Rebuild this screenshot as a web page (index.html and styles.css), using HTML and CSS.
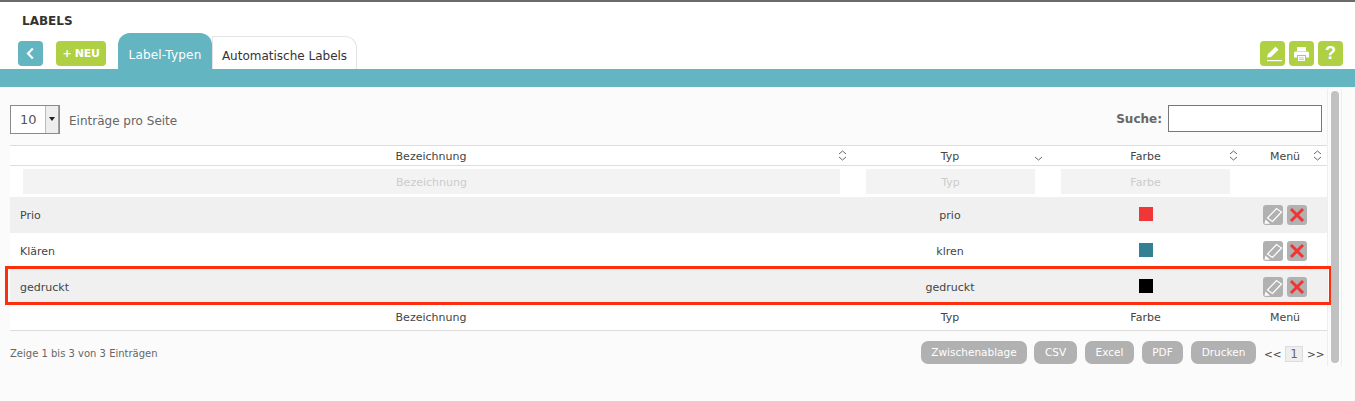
FILE: index.html
```html
<!DOCTYPE html>
<html lang="de">
<head>
    <meta charset="UTF-8">
    <meta name="viewport" content="width=device-width, initial-scale=1.0">
    <title>Labels</title>
    <link rel="stylesheet" href="styles.css">
</head>

<body>

    <header class="top">
        <h1 class="page-title">LABELS</h1>
        <div class="toolbar">
            <a class="btn btn-back" href="#">
                <svg width="25" height="25" viewBox="0 0 25 25"><path d="M14.8 7.5 L10 12.5 L14.8 17.5" fill="none" stroke="#fff" stroke-width="2.2"/></svg>
            </a>
            <a class="btn btn-new" href="#">+ NEU</a>
            <div class="tabs">
                <a class="tab tab-active" href="#">Label-Typen</a>
                <a class="tab" href="#">Automatische Labels</a>
            </div>
            <div class="tools">
                <a class="btn btn-tool" href="#">
                    <svg width="25" height="25" viewBox="0 0 25 25">
                        <path d="M7 16.5 L8 13 L15.5 5.8 L18.6 8.8 L11 16 Z" fill="#fff"/>
                        <rect x="7" y="19" width="15" height="1.2" fill="#fff"/>
                    </svg>
                </a>
                <a class="btn btn-tool" href="#">
                    <svg width="25" height="25" viewBox="0 0 25 25">
                        <rect x="8" y="6" width="9" height="4" fill="#fff"/>
                        <path d="M6.5 10.5 H18.5 Q20 10.5 20 12 V16.5 H17 V14 H8 V16.5 H5 V12 Q5 10.5 6.5 10.5 Z" fill="#fff"/>
                        <path d="M9 15 H16 V20 H9 Z M10 16.5 V17.2 H15 V16.5 Z M10 18.2 V18.9 H15 V18.2 Z" fill="#fff" fill-rule="evenodd"/>
                    </svg>
                </a>
                <a class="btn btn-tool btn-help" href="#">?</a>
            </div>
        </div>
    </header>

    <div class="teal-bar"></div>

    <main class="panel">
        <div class="content">
            <div class="controls">
                <div class="page-size">
                    <div class="select">
                        <span class="select-value">10</span>
                        <span class="select-arrow"></span>
                    </div>
                    <span class="page-size-label">Einträge pro Seite</span>
                </div>
                <label class="search">Suche: <input type="text"></label>
            </div>

            <div class="table-wrap">
                <table class="labels">
                    <colgroup>
                        <col class="col-name">
                        <col class="col-type">
                        <col class="col-color">
                        <col class="col-menu">
                    </colgroup>
                    <thead>
                        <tr class="head-row">
                            <th class="sort">Bezeichnung
                                <svg class="sort-icon" width="9" height="11" viewBox="0 0 9 11"><path d="M1 4 L4.5 1 L8 4 M1 7 L4.5 10 L8 7" fill="none" stroke="#666" stroke-width="1"/></svg>
                            </th>
                            <th class="sort">Typ
                                <svg class="sort-icon sort-down" width="9" height="11" viewBox="0 0 9 11"><path d="M1 7 L4.5 10 L8 7" fill="none" stroke="#666" stroke-width="1"/></svg>
                            </th>
                            <th class="sort">Farbe
                                <svg class="sort-icon" width="9" height="11" viewBox="0 0 9 11"><path d="M1 4 L4.5 1 L8 4 M1 7 L4.5 10 L8 7" fill="none" stroke="#666" stroke-width="1"/></svg>
                            </th>
                            <th class="sort">Menü
                                <svg class="sort-icon" width="9" height="11" viewBox="0 0 9 11"><path d="M1 4 L4.5 1 L8 4 M1 7 L4.5 10 L8 7" fill="none" stroke="#666" stroke-width="1"/></svg>
                            </th>
                        </tr>
                        <tr class="filter-row">
                            <td><input class="filter filter-name" type="text" placeholder="Bezeichnung"></td>
                            <td><input class="filter" type="text" placeholder="Typ"></td>
                            <td><input class="filter filter-color" type="text" placeholder="Farbe"></td>
                            <td></td>
                        </tr>
                    </thead>
                    <tbody>
                        <tr class="odd">
                            <td class="name">Prio</td>
                            <td>prio</td>
                            <td><span class="swatch swatch-red"></span></td>
                            <td>
                                <div class="actions">
                                    <a class="act" href="#"><svg width="20" height="20" viewBox="0 0 20 20"><path d="M4.5 13 L13.5 3.5 L18.5 7 L9.5 16.5 Z" fill="none" stroke="#fff" stroke-width="1.2"/><path d="M1.5 18.8 L2.5 14.5 L7 18.8 Z" fill="#fff"/></svg></a>
                                    <a class="act" href="#"><svg width="20" height="20" viewBox="0 0 20 20"><path d="M4 4 L16 16 M16 4 L4 16" stroke="#ef3535" stroke-width="3"/></svg></a>
                                </div>
                            </td>
                        </tr>
                        <tr>
                            <td class="name">Klären</td>
                            <td>klren</td>
                            <td><span class="swatch swatch-teal"></span></td>
                            <td>
                                <div class="actions">
                                    <a class="act" href="#"><svg width="20" height="20" viewBox="0 0 20 20"><path d="M4.5 13 L13.5 3.5 L18.5 7 L9.5 16.5 Z" fill="none" stroke="#fff" stroke-width="1.2"/><path d="M1.5 18.8 L2.5 14.5 L7 18.8 Z" fill="#fff"/></svg></a>
                                    <a class="act" href="#"><svg width="20" height="20" viewBox="0 0 20 20"><path d="M4 4 L16 16 M16 4 L4 16" stroke="#ef3535" stroke-width="3"/></svg></a>
                                </div>
                            </td>
                        </tr>
                        <tr class="odd">
                            <td class="name">gedruckt</td>
                            <td>gedruckt</td>
                            <td><span class="swatch swatch-black"></span></td>
                            <td>
                                <div class="actions">
                                    <a class="act" href="#"><svg width="20" height="20" viewBox="0 0 20 20"><path d="M4.5 13 L13.5 3.5 L18.5 7 L9.5 16.5 Z" fill="none" stroke="#fff" stroke-width="1.2"/><path d="M1.5 18.8 L2.5 14.5 L7 18.8 Z" fill="#fff"/></svg></a>
                                    <a class="act" href="#"><svg width="20" height="20" viewBox="0 0 20 20"><path d="M4 4 L16 16 M16 4 L4 16" stroke="#ef3535" stroke-width="3"/></svg></a>
                                </div>
                            </td>
                        </tr>
                    </tbody>
                    <tfoot>
                        <tr class="foot-row">
                            <th>Bezeichnung</th>
                            <th>Typ</th>
                            <th>Farbe</th>
                            <th>Menü</th>
                        </tr>
                    </tfoot>
                </table>
                <div class="highlight"></div>
            </div>

            <div class="table-footer">
                <span class="info">Zeige 1 bis 3 von 3 Einträgen</span>
                <div class="export">
                    <a class="pill pill-clip" href="#">Zwischenablage</a>
                    <a class="pill pill-csv" href="#">CSV</a>
                    <a class="pill pill-excel" href="#">Excel</a>
                    <a class="pill pill-pdf" href="#">PDF</a>
                    <a class="pill pill-print" href="#">Drucken</a>
                </div>
                <div class="pager">
                    <span class="pager-arrow">&lt;&lt;</span>
                    <span class="page-num">1</span>
                    <span class="pager-arrow">&gt;&gt;</span>
                </div>
            </div>
        </div>
        <div class="scrollbar"><div class="thumb"></div></div>
    </main>

</body>
</html>
```

FILE: styles.css
```css
html, body {
    margin: 0;
    height: 401px;
    overflow: hidden;
}

body {
    font-family: "DejaVu Sans", Verdana, sans-serif;
    font-size: 11px;
    color: #444;
    background-color: #fbfbfb;
}

a {
    text-decoration: none;
}

.top {
    height: 67px;
    background-color: #fff;
    border-top: 2px solid #6b6b6b;
    position: relative;
}

.page-title {
    margin: 0;
    padding: 12px 0 0 22px;
    font-size: 12px;
    line-height: 14px;
    font-weight: bold;
    color: #333;
}

.toolbar {
    display: flex;
    align-items: flex-end;
    height: 36px;
    margin-top: 5px;
    padding: 0 12px 0 18px;
}

.btn {
    display: flex;
    align-items: center;
    justify-content: center;
    height: 25px;
    margin-bottom: 3px;
    border-radius: 4px;
    color: #fff;
}

.btn-back {
    width: 25px;
    background-color: #63b5c2;
}

.btn-new {
    width: 50px;
    margin-left: 13px;
    background-color: #b0d044;
    font-weight: bold;
    font-size: 11px;
    letter-spacing: -0.3px;
}

.tabs {
    display: flex;
    align-items: flex-end;
    margin-left: 12px;
}

.tab {
    display: block;
    box-sizing: border-box;
    width: 145px;
    height: 33px;
    padding-top: 12px;
    text-align: center;
    font-size: 12px;
    line-height: 15px;
    color: #333;
    background-color: #fff;
    border: 1px solid #e4e4e4;
    border-bottom: none;
    border-radius: 0 12px 0 0;
}

.tab-active {
    width: 94px;
    height: 36px;
    padding-top: 15px;
    letter-spacing: 0.2px;
    color: #fff;
    background-color: #63b5c2;
    border: none;
    border-radius: 12px 12px 0 0;
}

.tools {
    display: flex;
    gap: 4px;
    margin-left: auto;
}

.btn-tool {
    width: 25px;
    background-color: #b0d044;
}

.btn-help {
    font-size: 18px;
    font-weight: bold;
    font-family: "Liberation Sans", Arial, sans-serif;
}

.teal-bar {
    height: 18px;
    background-color: #63b5c2;
}

.panel {
    display: flex;
    padding-top: 2px;
    height: 312px;
    box-sizing: border-box;
}

.content {
    width: 1317px;
    margin-left: 10px;
}

.controls {
    display: flex;
    justify-content: space-between;
    align-items: flex-start;
    height: 56px;
    padding-top: 16px;
    box-sizing: border-box;
}

.page-size {
    display: flex;
    align-items: center;
    gap: 9px;
    font-size: 12px;
    color: #666;
}

.page-size-label {
    padding-top: 2px;
}

.select {
    display: flex;
    box-sizing: border-box;
    width: 50px;
    height: 29px;
    background-color: #fff;
    border: 1px solid #8a8a8a;
}

.select-value {
    flex: 1;
    padding-left: 9px;
    font-size: 13px;
    line-height: 28px;
    color: #555;
}

.select-arrow {
    position: relative;
    width: 14px;
    background-color: #eee;
    border-left: 1px solid #bbb;
    border-right: 1px solid #a0a0a0;
    box-sizing: border-box;
}

.select-arrow::after {
    content: "";
    position: absolute;
    left: 3px;
    top: 11px;
    border-left: 3px solid transparent;
    border-right: 3px solid transparent;
    border-top: 4px solid #222;
}

.search {
    display: flex;
    align-items: center;
    gap: 6px;
    margin-right: 5px;
    font-size: 12px;
    font-weight: bold;
    color: #666;
}

.search input {
    box-sizing: border-box;
    width: 154px;
    height: 27px;
    background-color: #fff;
    border: 1px solid #777;
    outline: none;
}

.table-wrap {
    position: relative;
}

.labels {
    width: 1317px;
    border-collapse: collapse;
    table-layout: fixed;
    background-color: #fff;
    font-size: 11px;
    color: #444;
}

.col-name { width: 842px; }
.col-type { width: 196px; }
.col-color { width: 195px; }
.col-menu { width: 84px; }

.labels th {
    font-weight: normal;
    padding: 0;
    text-align: center;
}

.labels td {
    padding: 0;
    text-align: center;
}

.head-row th {
    position: relative;
    box-sizing: border-box;
    height: 20px;
    padding-top: 1px;
    border-top: 1px solid #ddd;
    border-bottom: 1px solid #ddd;
}

.sort-icon {
    position: absolute;
    top: 4px;
    right: 5px;
}

.filter-row td {
    height: 31px;
}

.filter {
    display: block;
    box-sizing: border-box;
    width: 169px;
    height: 25px;
    margin: 0 auto 0 14px;
    padding: 2px 0 0;
    text-align: center;
    font-family: inherit;
    font-size: 11px;
    background-color: #f3f3f3;
    border: none;
    outline: none;
}

.filter::placeholder {
    color: #ccc;
}

.filter-name {
    width: 817px;
    margin-left: 13px;
}

.filter-color {
    margin-left: 13px;
}

.labels tbody td {
    height: 36px;
}

.odd td {
    background-color: #f0f0f0;
}

.labels td.name {
    padding-left: 10px;
    text-align: left;
}

.swatch {
    display: block;
    width: 14px;
    height: 14px;
    margin: 0 auto;
    position: relative;
    top: -1px;
}

.swatch-red { background-color: #f03636; }
.swatch-teal { background-color: #337f93; }
.swatch-black { background-color: #000; }

.actions {
    display: flex;
    gap: 4px;
    padding-left: 20px;
}

.act {
    display: block;
    width: 20px;
    height: 20px;
    background-color: #b1b1b1;
    border-radius: 3px;
}

.act svg {
    display: block;
}

.foot-row th {
    box-sizing: border-box;
    height: 25px;
    padding-top: 1px;
    border-bottom: 1px solid #ddd;
}

.highlight {
    position: absolute;
    left: -5px;
    top: 121px;
    width: 1321px;
    height: 33px;
    border: 3px solid #fb2f0e;
    border-right-width: 2px;
    pointer-events: none;
}

.table-footer {
    display: flex;
    align-items: flex-start;
    padding-top: 10px;
}

.info {
    font-size: 10px;
    line-height: 25px;
    color: #666;
}

.export {
    display: flex;
    margin-left: auto;
    gap: 8px;
}

.pill {
    display: block;
    height: 23px;
    line-height: 23px;
    text-align: center;
    font-size: 10.5px;
    color: #fff;
    background-color: #b1b1b1;
    border-radius: 7px;
}

.pill-clip { width: 106px; margin-right: -1px; }
.pill-csv { width: 43px; }
.pill-excel { width: 49px; }
.pill-pdf { width: 41px; }
.pill-print { width: 65px; }

.pager {
    display: flex;
    align-items: center;
    gap: 4px;
    flex: none;
    width: 61px;
    margin-left: 8px;
    margin-right: 2px;
    height: 24px;
    margin-top: 1px;
    font-size: 12px;
    white-space: nowrap;
    color: #444;
}

.pager-arrow {
    flex: none;
    width: 17px;
    font-size: 10.5px;
}

.page-num {
    box-sizing: border-box;
    flex: none;
    width: 18px;
    height: 16px;
    line-height: 15px;
    text-align: center;
    color: #666;
    background-color: #eee;
    border: 1px solid #ddd;
}

.scrollbar {
    box-sizing: border-box;
    width: 15px;
    height: 277px;
    padding: 2px 2px 0 3px;
    border-right: 1px solid #eee;
    border-left: 1px solid #eee;
}

.thumb {
    width: 8px;
    height: 272px;
    background-color: #c1c1c1;
    border-radius: 4px;
}
```
